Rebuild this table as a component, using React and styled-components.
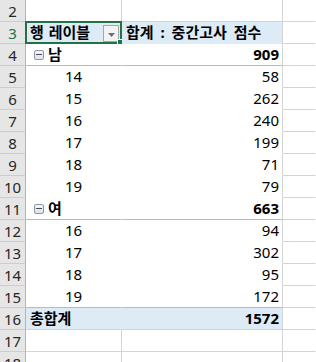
import React from "react";
import styled, { createGlobalStyle } from "styled-components";

const GlobalStyle = createGlobalStyle`
  html, body { margin: 0; padding: 0; background: #ffffff; overflow: hidden; }
  body { font-family: "Noto Sans", "Noto Sans CJK KR", sans-serif; }
`;

const GRID = "#d4d4d4";
const BLUE_LINE = "#9bc2e6";
const BLUE_FILL = "#ddebf7";

const Sheet = styled.div`
  display: grid;
  grid-template-columns: 26px 96px 161px 1fr;
  grid-auto-rows: 22px;
  width: 316px;
  height: 362px;
  overflow: hidden;
`;

const RowHead = styled.div`
  box-sizing: border-box;
  background: #e6e6e6;
  border-right: 1px solid #b4b4b4;
  border-bottom: 1px solid #cdcdcd;
  display: flex;
  align-items: center;
  justify-content: center;
  font-family: "Noto Sans", "Noto Sans CJK KR", sans-serif;
  font-size: 15px;
  line-height: 1;
  color: ${(p) => (p.$active ? "#217346" : "#262626")};
  padding-top: 1px;
`;

const Cell = styled.div`
  box-sizing: border-box;
  position: relative;
  display: flex;
  align-items: center;
  justify-content: ${(p) => (p.$align === "right" ? "flex-end" : "flex-start")};
  gap: 4px;
  background: ${(p) => p.$fill || "#ffffff"};
  border-right: 1px solid ${(p) => p.$right || "transparent"};
  border-bottom: 1px solid ${(p) => p.$bottom || "transparent"};
  padding: 0 ${(p) => (p.$align === "right" ? "3px" : "0")} 0 ${(p) => p.$indent ?? 4}px;
  font-family: "Noto Sans", "Noto Sans CJK KR", sans-serif;
  font-size: 15px;
  line-height: 1;
  font-weight: ${(p) => (p.$bold ? 700 : 400)};
  word-spacing: ${(p) => p.$wordGap || 0}px;
  color: #000000;
  white-space: nowrap;
`;

const Selection = styled.div`
  position: absolute;
  left: -1px;
  top: -1px;
  right: -1px;
  bottom: -1px;
  border: 2px solid #217346;
  pointer-events: none;
`;

const FillHandle = styled.div`
  position: absolute;
  right: -4px;
  bottom: -4px;
  width: 5px;
  height: 5px;
  background: #217346;
  border: 1px solid #ffffff;
`;

const FilterButton = styled.div`
  position: absolute;
  right: 2px;
  top: 3px;
  width: 16px;
  height: 17px;
  box-sizing: border-box;
  border: 1px solid #a6a6a6;
  background: #f3f3f3;
  display: flex;
  align-items: center;
  justify-content: center;
  padding-top: 3px;
`;

const Toggle = styled.span`
  box-sizing: border-box;
  width: 10px;
  height: 10px;
  border: 1px solid #8b97a8;
  border-radius: 2px;
  background: linear-gradient(#f4f6f9, #dfe4ea);
  display: inline-flex;
  align-items: center;
  justify-content: center;
  flex: none;
`;

const ToggleBar = styled.span`
  width: 6px;
  height: 1px;
  background: #4a4a4a;
`;

const rows = [
  { n: 2, kind: "empty" },
  { n: 3, kind: "head" },
  { n: 4, kind: "group", label: "남", value: 909 },
  { n: 5, kind: "item", label: "14", value: 58 },
  { n: 6, kind: "item", label: "15", value: 262 },
  { n: 7, kind: "item", label: "16", value: 240 },
  { n: 8, kind: "item", label: "17", value: 199 },
  { n: 9, kind: "item", label: "18", value: 71 },
  { n: 10, kind: "item", label: "19", value: 79 },
  { n: 11, kind: "group", label: "여", value: 663 },
  { n: 12, kind: "item", label: "16", value: 94 },
  { n: 13, kind: "item", label: "17", value: 302 },
  { n: 14, kind: "item", label: "18", value: 95 },
  { n: 15, kind: "item", label: "19", value: 172, last: true },
  { n: 16, kind: "total", label: "총합계", value: 1572 },
  { n: 17, kind: "empty" },
  { n: 18, kind: "empty" },
];

function PivotRow({ row }) {
  const { kind } = row;
  if (kind === "empty") {
    return (
      <>
        <Cell $right={GRID} $bottom={GRID} />
        <Cell $right={GRID} $bottom={GRID} />
      </>
    );
  }
  if (kind === "head") {
    return (
      <>
        <Cell $fill={BLUE_FILL} $bold $wordGap={1}>
          행 레이블
          <FilterButton>
            <svg width="7" height="4" viewBox="0 0 7 4">
              <path d="M0 0 L7 0 L3.5 4 Z" fill="#6e6e6e" />
            </svg>
          </FilterButton>
          <Selection>
            <FillHandle />
          </Selection>
        </Cell>
        <Cell $fill={BLUE_FILL} $right={GRID} $bold $indent={4} $wordGap={3}>
          합계 : 중간고사 점수
        </Cell>
      </>
    );
  }
  if (kind === "group") {
    return (
      <>
        <Cell $bottom={BLUE_LINE} $bold $indent={8}>
          <Toggle>
            <ToggleBar />
          </Toggle>
          {row.label}
        </Cell>
        <Cell $bottom={BLUE_LINE} $right={GRID} $align="right" $bold>
          {row.value}
        </Cell>
      </>
    );
  }
  if (kind === "total") {
    return (
      <>
        <Cell $fill={BLUE_FILL} $bottom={GRID} $bold>
          {row.label}
        </Cell>
        <Cell $fill={BLUE_FILL} $bottom={GRID} $right={GRID} $align="right" $bold>
          {row.value}
        </Cell>
      </>
    );
  }
  const line = row.last ? BLUE_LINE : undefined;
  return (
    <>
      <Cell $bottom={line} $indent={39}>
        {row.label}
      </Cell>
      <Cell $bottom={line} $right={GRID} $align="right">
        {row.value}
      </Cell>
    </>
  );
}

export default function App() {
  return (
    <>
      <GlobalStyle />
      <Sheet>
        {rows.map((row) => (
          <React.Fragment key={row.n}>
            <RowHead $active={row.n === 3}>{row.n}</RowHead>
            <PivotRow row={row} />
            <Cell $bottom={GRID} />
          </React.Fragment>
        ))}
      </Sheet>
    </>
  );
}
